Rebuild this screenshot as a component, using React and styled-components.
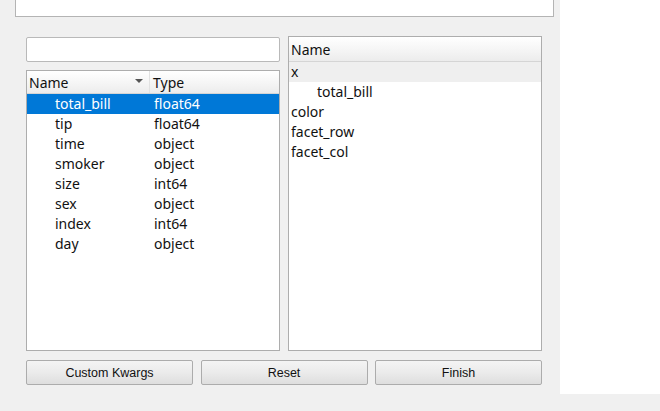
import React from 'react';
import styled, { createGlobalStyle } from 'styled-components';

const GlobalStyle = createGlobalStyle`
  html, body {
    margin: 0;
    padding: 0;
    background: #f0f0f0;
    overflow: hidden;
  }
  #root {
    width: 660px;
    height: 411px;
  }
`;

const Screen = styled.div`
  display: flex;
  height: 411px;
  align-items: flex-start;
`;

const Dialog = styled.div`
  width: 560px;
  height: 394px;
  background: #f0f0f0;
  display: flex;
  flex-direction: column;
`;

const SidePanel = styled.div`
  width: 100px;
  height: 394px;
  background: #ffffff;
`;

const TopBox = styled.div`
  margin-left: 15px;
  width: 537px;
  height: 16px;
  background: #ffffff;
  border: 1px solid #b4b4b4;
  border-top: none;
`;

const Body = styled.div`
  padding: 19px 18px 0 26px;
  display: flex;
  flex-direction: column;
  gap: 9px;
`;

const Columns = styled.div`
  display: grid;
  grid-template-columns: 254px 254px;
  gap: 8px;
  height: 315px;
`;

const LeftColumn = styled.div`
  display: flex;
  flex-direction: column;
  gap: 8px;
  min-height: 0;
`;

const SearchInput = styled.input`
  box-sizing: border-box;
  width: 254px;
  height: 25px;
  margin: 1px 0 0;
  border: 1px solid #b9b9b9;
  border-radius: 2px;
  background: #ffffff;
  outline: none;
  padding: 0 4px;
  font: 14px "Noto Sans", "Open Sans", sans-serif;
`;

const TreeFrame = styled.div`
  box-sizing: border-box;
  flex: 1;
  border: 1px solid #adadad;
  background: #ffffff;
  display: flex;
  flex-direction: column;
  min-height: 0;
  font-family: "Noto Sans", "Open Sans", sans-serif;
  font-size: 14px;
  color: #111;
`;

const HeaderRow = styled.div`
  display: grid;
  grid-template-columns: ${p => p.$cols};
  height: ${p => p.$height}px;
  background: linear-gradient(#ffffff, #f4f4f4 60%, #ececec);
  border-bottom: 1px solid #d5d5d5;
`;

const HeaderCell = styled.div`
  position: relative;
  display: flex;
  align-items: center;
  padding-left: ${p => p.$pad}px;
  border-right: ${p => (p.$divider ? '1px solid #e2e2e2' : 'none')};
`;

const SortArrow = styled.span`
  position: absolute;
  right: 6px;
  top: 8px;
  width: 0;
  height: 0;
  border-left: 4px solid transparent;
  border-right: 4px solid transparent;
  border-top: 4px solid #555;
`;

const Row = styled.div`
  display: grid;
  grid-template-columns: ${p => p.$cols};
  height: 20px;
  line-height: 20px;
  background: ${p => (p.$selected ? '#0078d7' : p.$shaded ? '#efefef' : 'transparent')};
  color: ${p => (p.$selected ? '#ffffff' : '#111')};
`;

const Cell = styled.div`
  padding-left: ${p => p.$pad}px;
  white-space: nowrap;
  overflow: hidden;
`;

const ButtonRow = styled.div`
  display: grid;
  grid-template-columns: 167px 167px 167px;
  column-gap: 7.5px;
`;

const Button = styled.button`
  box-sizing: border-box;
  height: 25px;
  border: 1px solid #acacac;
  border-radius: 2px;
  background: linear-gradient(#f4f4f4, #ebebeb 50%, #dedede);
  font: 12.5px "Liberation Sans", Arial, sans-serif;
  color: #111;
  padding: 0;
`;

const columns = [
  { name: 'total_bill', type: 'float64' },
  { name: 'tip', type: 'float64' },
  { name: 'time', type: 'object' },
  { name: 'smoker', type: 'object' },
  { name: 'size', type: 'int64' },
  { name: 'sex', type: 'object' },
  { name: 'index', type: 'int64' },
  { name: 'day', type: 'object' },
];

const fields = [
  { label: 'x', indent: 3, shaded: true },
  { label: 'total_bill', indent: 29 },
  { label: 'color', indent: 3 },
  { label: 'facet_row', indent: 3 },
  { label: 'facet_col', indent: 3 },
];

const leftCols = '123px 1fr';

export default function App() {
  return (
    <>
      <GlobalStyle />
      <Screen>
        <Dialog>
          <TopBox />
          <Body>
            <Columns>
              <LeftColumn>
                <SearchInput />
                <TreeFrame>
                  <HeaderRow $cols={leftCols} $height={22}>
                    <HeaderCell $pad={2} $divider>
                      Name
                      <SortArrow />
                    </HeaderCell>
                    <HeaderCell $pad={3}>Type</HeaderCell>
                  </HeaderRow>
                  {columns.map((c, i) => (
                    <Row key={c.name} $cols={leftCols} $selected={i === 0}>
                      <Cell $pad={28}>{c.name}</Cell>
                      <Cell $pad={4}>{c.type}</Cell>
                    </Row>
                  ))}
                </TreeFrame>
              </LeftColumn>
              <TreeFrame>
                <HeaderRow $cols="1fr" $height={24}>
                  <HeaderCell $pad={2}>Name</HeaderCell>
                </HeaderRow>
                {fields.map(f => (
                  <Row key={f.label} $cols="1fr" $shaded={f.shaded}>
                    <Cell $pad={f.indent - 1}>{f.label}</Cell>
                  </Row>
                ))}
              </TreeFrame>
            </Columns>
            <ButtonRow>
              <Button>Custom Kwargs</Button>
              <Button>Reset</Button>
              <Button>Finish</Button>
            </ButtonRow>
          </Body>
        </Dialog>
        <SidePanel />
      </Screen>
    </>
  );
}
